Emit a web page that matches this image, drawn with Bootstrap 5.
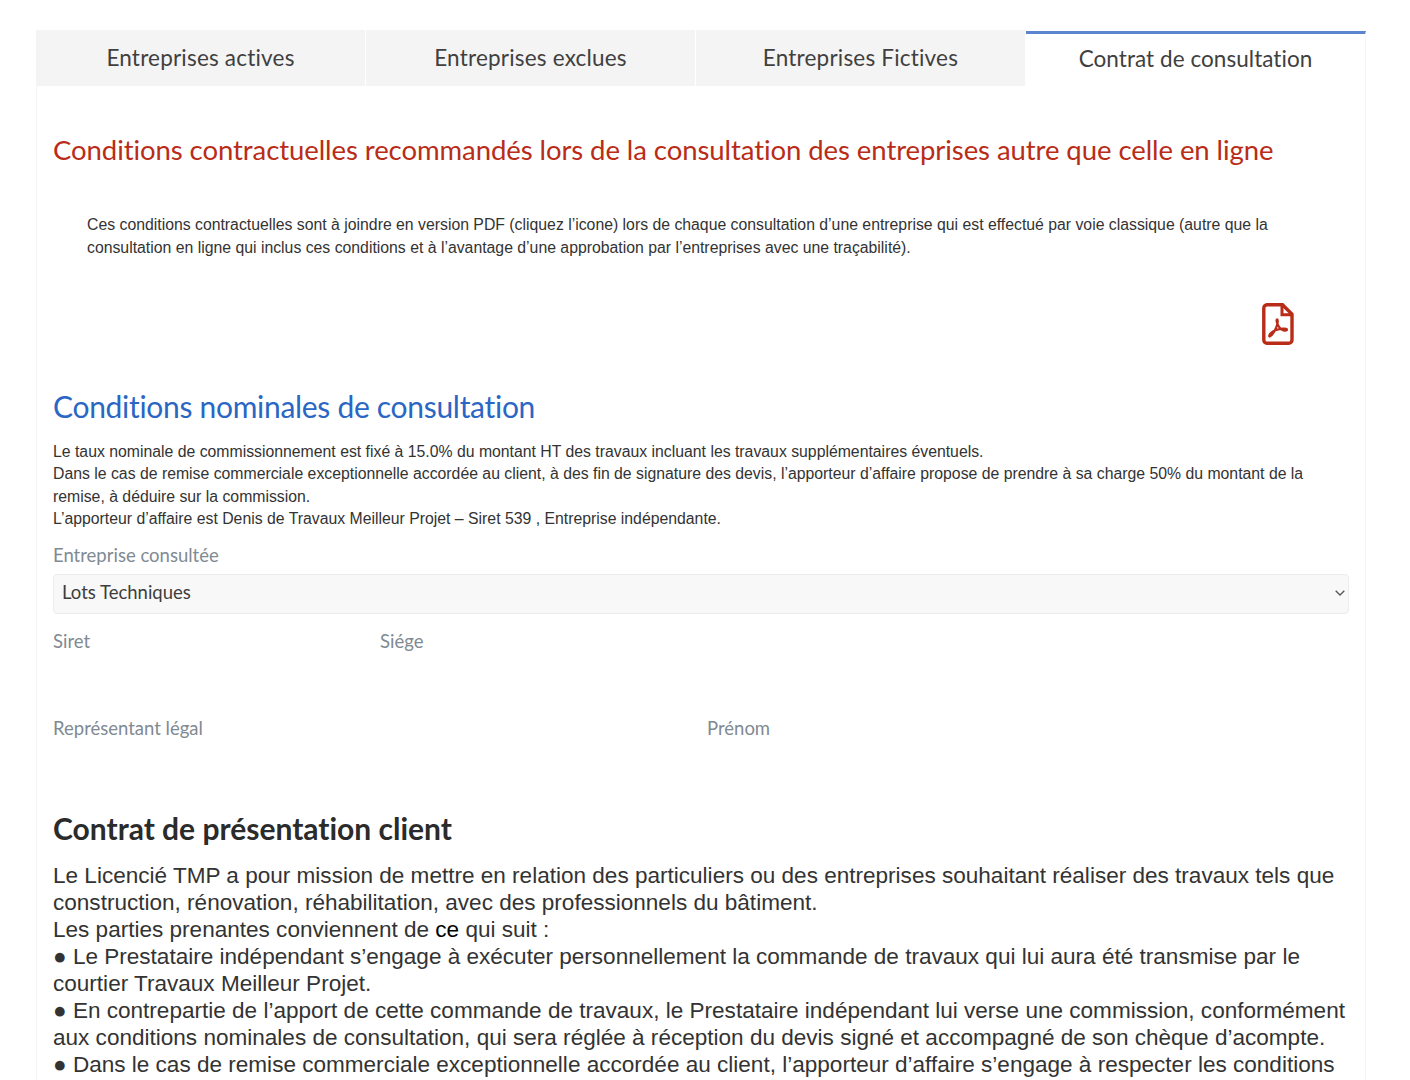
<!DOCTYPE html>
<html lang="fr">
<head>
<meta charset="utf-8">
<title>Contrat de consultation</title>
<link href="https://cdn.jsdelivr.net/npm/bootstrap@5.3.0/dist/css/bootstrap.min.css" rel="stylesheet">
<style>
html,body{height:1080px;overflow:hidden}
body{background:#fff;font-family:"Liberation Sans",Arial,sans-serif;color:#333;font-variant-ligatures:none}
.shell{padding:30px 44px 0 36px}
.tabrow{display:flex;gap:1px;height:56px}
.tabitem{flex:0 0 329px;background:#f4f4f4;display:flex;align-items:center;justify-content:center;font-family:Lato,sans-serif;font-size:22.5px;color:#404040;padding-bottom:1px;letter-spacing:.2px}
.tabitem.on{flex:1 1 0;background:#fff;border-top:3px solid #5b84d0;border-right:1px solid #f5f5f5;padding-bottom:3px;letter-spacing:.05px;margin-top:1px}
.panel{border:1px solid #f5f5f5;border-top:0;padding:0 16px;height:1010px;overflow:hidden}
.redhead{font-family:Lato,sans-serif;font-size:27.5px;line-height:36px;color:#b92c18;margin:46px 0 0;font-weight:400;letter-spacing:-.07px;white-space:nowrap}
.intro{font-size:15.8px;line-height:23px;margin:45px 0 0 34px;width:1210px}
.pdfwrap{padding:44px 55px 0 0;height:127px}
.bluehead{font-family:Lato,sans-serif;font-size:30px;line-height:40px;color:#2a66c4;margin:0;font-weight:400;letter-spacing:-.3px}
.nominal{font-size:15.8px;line-height:22.4px;margin:15px 0 0}
.lbl{font-family:Lato,sans-serif;font-size:18.5px;color:#808a92;line-height:24px}
.pick{height:40px;margin-top:7px;background:#f8f8f8;border:1px solid #ececec;border-radius:4px;padding:0 3px 2px 8px;font-family:Lato,sans-serif;font-size:18.5px;color:#3d3d3d}
.fieldrow{--bs-gutter-x:12px;height:87px}
.firstrow{margin-top:15px}
.blackhead{font-family:Lato,sans-serif;font-size:30px;line-height:38px;font-weight:700;color:#2b2b2b;margin:6px 0 0}
.contract{font-size:22.55px;line-height:27px;margin:15px 0 0;width:1300px}
.dark{color:#000}
</style>
</head>
<body>
<div class="shell">
  <div class="tabrow">
    <div class="tabitem">Entreprises actives</div>
    <div class="tabitem">Entreprises exclues</div>
    <div class="tabitem">Entreprises Fictives</div>
    <div class="tabitem on">Contrat de consultation</div>
  </div>
  <div class="panel">
    <h2 class="redhead">Conditions contractuelles recommandés lors de la consultation des entreprises autre que celle en ligne</h2>
    <p class="intro">Ces conditions contractuelles sont à joindre en version PDF (cliquez l’icone) lors de chaque consultation d’une entreprise qui est effectué par voie classique (autre que la consultation en ligne qui inclus ces conditions et à l’avantage d’une approbation par l’entreprises avec une traçabilité).</p>
    <div class="pdfwrap d-flex justify-content-end align-items-start">
      <svg width="32" height="42" viewBox="0 0 32 42" fill="none" stroke="#b92c18" aria-label="PDF">
        <path d="M5 1.800H20.500L30 11.300V37a3.300 3.300 0 0 1-3.300 3.300H5A3.300 3.300 0 0 1 1.800 37V5A3.300 3.300 0 0 1 5 1.800Z" stroke-width="3.400"/>
        <path d="M20 2v9.800h10" stroke-width="3"/>
        <path d="M7.500 33.500c3-1 6.500-7 8-13 .6-2.500 0-4.500-.6-4-1 1 .5 6 4 9.500 2 1.800 5 2 6 1 .4-1-1.500-1.500-4-1.300-4 .3-9 1.800-12 4.300-1.500 1.500-2 3-1.400 3.500Z" stroke-width="2.200"/>
      </svg>
    </div>
    <h2 class="bluehead">Conditions nominales de consultation</h2>
    <p class="nominal">Le taux nominale de commissionnement est fixé à 15.0% du montant HT des travaux incluant les travaux supplémentaires éventuels.<br>Dans le cas de remise commerciale exceptionnelle accordée au client, à des fin de signature des devis, l’apporteur d’affaire propose de prendre à sa charge 50% du montant de la remise, à déduire sur la commission.<br>L’apporteur d’affaire est Denis de Travaux Meilleur Projet – Siret 539 , Entreprise indépendante.</p>
    <div class="lbl mt-2 pt-1">Entreprise consultée</div>
    <div class="pick d-flex align-items-center justify-content-between">
      <span>Lots Techniques</span>
      <svg width="10" height="6" viewBox="0 0 10 6" fill="none" stroke="#555" stroke-width="1.300"><path d="M.7.700 5 5 9.300.700"/></svg>
    </div>
    <div class="row lbl fieldrow firstrow">
      <div class="col-3">Siret</div>
      <div class="col-9">Siége</div>
    </div>
    <div class="row lbl fieldrow">
      <div class="col-6">Représentant légal</div>
      <div class="col-6">Prénom</div>
    </div>
    <h2 class="blackhead">Contrat de présentation client</h2>
    <p class="contract">Le Licencié TMP a pour mission de mettre en relation des particuliers ou des entreprises souhaitant réaliser des travaux tels que construction, rénovation, réhabilitation, avec des professionnels du bâtiment.<br>Les parties prenantes conviennent de <span class="dark">ce</span> qui suit :<br>● Le Prestataire indépendant s’engage à exécuter personnellement la commande de travaux qui lui aura été transmise par le courtier Travaux Meilleur Projet.<br>● En contrepartie de l’apport de cette commande de travaux, le Prestataire indépendant lui verse une commission, conformément aux conditions nominales de consultation, qui sera réglée à réception du devis signé et accompagné de son chèque d’acompte.<br>● Dans le cas de remise commerciale exceptionnelle accordée au client, l’apporteur d’affaire s’engage à respecter les conditions</p>
  </div>
</div>
<script src="https://cdn.jsdelivr.net/npm/bootstrap@5.3.0/dist/js/bootstrap.bundle.min.js"></script>
</body>
</html>
